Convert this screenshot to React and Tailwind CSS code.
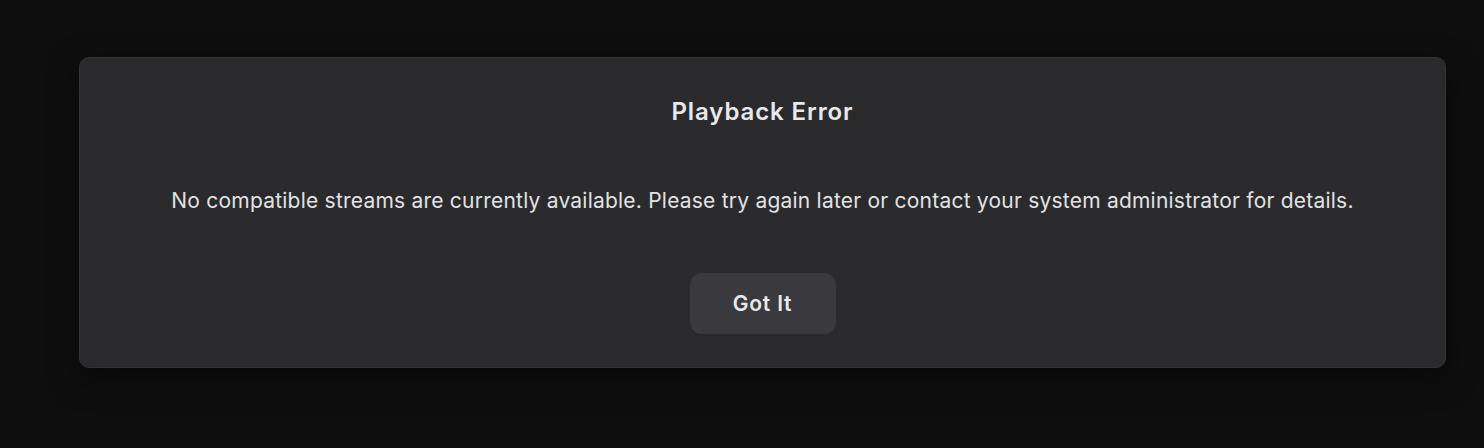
export default function App() {
  return (
    <div className="min-h-[448px] w-full bg-[#0e0e0e] pt-[57px] pl-[79px] font-['Inter','Noto_Sans',sans-serif]">
      <div className="flex h-[311px] w-[1367px] flex-col items-center rounded-[10px] border border-[#333336] bg-[#2a2a2d] pt-[38px] shadow-[0_10px_30px_rgba(0,0,0,0.5)]">
        <h2 className="text-[24px] leading-[32px] font-semibold tracking-[0.9px] text-[#e8e8ea]">Playback Error</h2>
        <p className="mt-[59px] text-[21px] leading-[28px] tracking-[0.22px] text-[#e2e2e4]">
          No compatible streams are currently available. Please try again later or contact your system administrator for details.
        </p>
        <button className="mt-[58px] h-[61px] w-[146px] rounded-[12px] bg-[#3a3a3e] text-[21px] font-semibold tracking-[0.8px] text-[#e8e8ea]">
          Got It
        </button>
      </div>
    </div>
  );
}
